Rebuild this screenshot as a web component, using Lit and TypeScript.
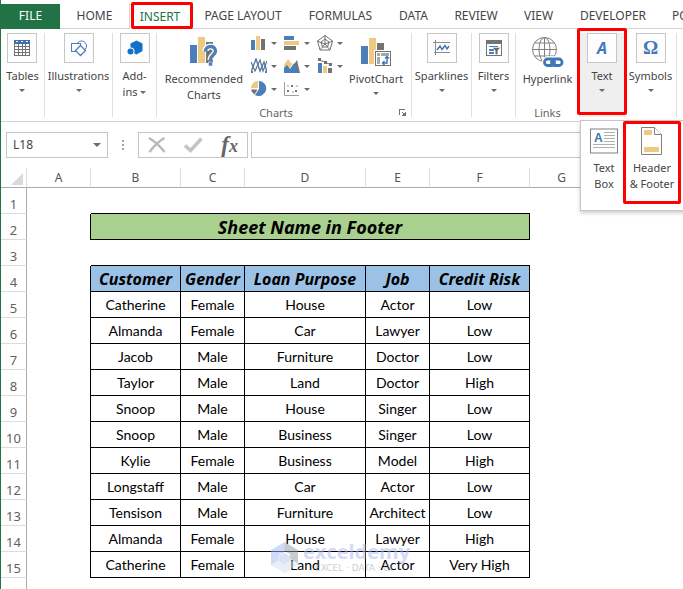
import { LitElement, html, svg, css, nothing } from "lit";
import { customElement, property } from "lit/decorators.js";

const BLUE = "#4a7fba";
const SAND = "#eec982";
const GRAY = "#737373";

/* ---------- icons ---------- */

const icons: Record<string, unknown> = {
  tables: html`<svg width="16" height="16" viewBox="0 0 16 16" shape-rendering="crispEdges">
    <rect x="0" y="0" width="16" height="16" fill="#737373" />
    <rect x="0" y="0" width="16" height="4" fill="#3d6fa8" />
    ${[2, 7, 12].map((x) => svg`<rect x=${x} y="1" width="2" height="1" fill="#fff"/>`)}
    ${[4, 7, 10, 13].map((y) => [1, 5, 9, 12].map((x) => svg`<rect x=${x} y=${y} width=${x === 9 ? 2 : 3} height="2" fill="#fff"/>`))}
  </svg>`,
  shapes: html`<svg width="18" height="17" viewBox="0 0 18 17" fill="#fff" stroke="#4a7fba">
    <circle cx="11.5" cy="6" r="5" />
    <rect x="1.5" y="3.5" width="9" height="8" />
    <path d="M10.500 5.500 L15.500 10.500 L10.500 15.500 L5.500 10.500Z" stroke-width="1.300" />
  </svg>`,
  addins: html`<svg width="16" height="16" viewBox="0 0 16 16">
    <path d="M9.500 0.500 L15.500 3.500 V11 L9.500 14.500 L3.500 11.500 V3.500Z" fill="#0f71c9" />
    <circle cx="3.500" cy="11.500" r="4" fill="#fff" />
    <circle cx="3.500" cy="11.500" r="3" fill="#0f71c9" />
  </svg>`,
  recommended: html`<svg width="30" height="32" viewBox="0 0 30 32">
    <rect x="1" y="9" width="7" height="18" fill="#4a7fba" />
    <rect x="9" y="1" width="7" height="26" fill="#eec982" />
    <rect x="17" y="6" width="7" height="21" fill="#737373" />
    <path d="M16.500 15 C16.500 9 26.500 9 26.500 15 C26.500 19 21.500 19 21.500 24" fill="none" stroke="#fff" stroke-width="6" />
    <path d="M16.500 15.500 C16.500 9 26.500 9 26.500 15 C26.500 19 21.500 19 21.500 24" fill="none" stroke="#4a7fba" stroke-width="3.400" />
    <rect x="19.500" y="26" width="4" height="4" fill="#4a7fba" stroke="#fff" stroke-width="0.500" />
  </svg>`,
  pivot: html`<svg width="30" height="30" viewBox="0 0 30 30">
    <rect x="0" y="9" width="7" height="18" fill="#4a7fba" />
    <rect x="8" y="1" width="7" height="26" fill="#eec982" />
    <rect x="16" y="6" width="7" height="8" fill="#737373" />
    <rect x="13" y="13" width="17" height="17" fill="#fff" />
    <rect x="14.500" y="14.500" width="15" height="14" fill="#fff" stroke="#737373" />
    <path d="M16 16h3v3h-3zM20 16h8v3h-8zM16 20h3v7h-3z" fill="#a8a8a8" />
    <path d="M22 26 H26 V20 M24 21.500 L26 19.500 L28 21.500 M23.500 24 L21.500 26 L23.500 28" fill="none" stroke="#3d72b4" stroke-width="1.400" />
  </svg>`,
  sparkline: html`<svg width="18" height="16" viewBox="0 0 18 16" fill="none">
    <path d="M0 2.500H17M2.500 0V15M1 12.500H17" stroke="#8a8a8a" />
    <path d="M4 10 L7 6 L9 9.500 L12 5.500 L14 9 L16 6" stroke="#3d72b4" stroke-width="1.400" />
  </svg>`,
  filter: html`<svg width="16" height="17" viewBox="0 0 16 17">
    <rect x="0.500" y="0.500" width="15" height="15" fill="#fff" stroke="#737373" />
    <rect x="0" y="0" width="16" height="4" fill="#737373" />
    <path d="M3 6.500H12" stroke="#4a7fba" />
    <path d="M3 10H8M3 13H8" stroke="#4a7fba" stroke-width="2" />
    <path d="M6.500 7.500H14.500L11.800 10.500V14.500H9.200V10.500Z" fill="#666" stroke="#fff" stroke-width="0.500" />
  </svg>`,
  link: html`<svg width="32" height="31" viewBox="0 0 32 31" fill="none">
    <g stroke="#808080">
      <circle cx="12.500" cy="12.500" r="12" />
      <ellipse cx="12.500" cy="12.500" rx="5.500" ry="12" />
      <path d="M12.500 0.500V24.500M0.500 12.500H24.500M2.500 6H22.500M2.500 19H22.500" />
    </g>
    <g stroke="#fff" stroke-width="6">
      <rect x="13" y="22" width="9" height="6" rx="3" />
      <rect x="20" y="22" width="9" height="6" rx="3" />
    </g>
    <g stroke="#3f78b8" stroke-width="2.800">
      <rect x="12.500" y="22" width="10" height="6.500" rx="3" />
      <rect x="19.500" y="22" width="10.500" height="6.500" rx="3" />
    </g>
  </svg>`,
  textbox: html`<svg width="28" height="26" viewBox="0 0 28 26" fill="none">
    <rect x="0.500" y="1" width="27" height="24" fill="#fff" stroke="#808080" />
    <path d="M14 4.500H25M14 7.500H25M14 10.500H25M14 13.500H25M3 16.500H25M3 19.500H25" stroke="#b0b0b0" />
    <text x="4" y="14" font-family="Liberation Sans" font-weight="700" font-size="12" fill="#3d72b4">A</text>
  </svg>`,
  headerfooter: html`<svg width="22" height="28" viewBox="0 0 22 28">
    <path d="M0.500 0.500H13.500L20.500 7.500V27.500H0.500Z" fill="#fff" stroke="#808080" />
    <path d="M13.500 0.500V7.500H20.500" fill="#fff" stroke="#808080" />
    <rect x="3" y="3" width="8" height="5" fill="#eec982" />
    <rect x="3" y="20" width="15" height="5" fill="#eec982" />
  </svg>`,
  wordart: html`<svg width="28" height="26" viewBox="0 0 28 26">
    <path d="M4 24 L17 2 H21 L24 24 H19 V19 H12 L9 24Z" fill="#4a7fba" />
  </svg>`,
  launcher: html`<svg width="8" height="8" viewBox="0 0 8 8" shape-rendering="crispEdges">
    <path d="M0.500 6V0.500H6" fill="none" stroke="#737373" />
    <path d="M7 2V7H2Z" fill="#737373" /><path d="M3.500 3.500L6 6" stroke="#737373" />
  </svg>`,
  cancel: html`<svg width="18" height="16" viewBox="0 0 18 16" fill="none" stroke="#b9b9b9" stroke-width="2.400">
    <path d="M1 1C6 4 12 9 16.500 15M16.500 1C11 4 6 9 1.500 15" />
  </svg>`,
  enter: html`<svg width="19" height="16" viewBox="0 0 19 16" fill="none" stroke="#c4c4c4" stroke-width="3.600">
    <path d="M1 8.500L6.500 13.500L17.500 1.500" />
  </svg>`,
};

const miniCharts: { label: string; art: unknown }[] = [
  { label: "Column chart", art: svg`<path fill=${BLUE} d="M0 5h4v10h-4z"/><path fill=${SAND} d="M5 1h4v14h-4z"/><path fill=${GRAY} d="M10 4h4v11h-4z"/>` },
  { label: "Bar chart", art: svg`<path fill=${BLUE} d="M0 1h10v4H0z"/><path fill=${SAND} d="M0 6h15v4H0z"/><path fill=${GRAY} d="M0 11h12v4H0z"/>` },
  { label: "Radar chart", art: svg`<g fill="none" stroke=${GRAY}><path d="M8 .5L15.500 6L13 15H3L.5 6Z"/><path d="M8 4L12 7L10.500 12H5.500L4 7Z"/><path d="M8 0V9L16 6M8 9L13 15M8 9L3 15M8 9L0 6"/></g>` },
  { label: "Line chart", art: svg`<g fill="none"><path stroke=${GRAY} stroke-width="1.200" d="M0 4L4 13L9 2L12 13L16 3"/><path stroke=${BLUE} stroke-width="1.400" d="M0 14L5 1L9 13L13 4L16 14"/></g><path fill=${BLUE} d="M0 13h2v2H0zM4 1h2v2H4zM14 13h2v2h-2z"/>` },
  { label: "Area chart", art: svg`<path fill=${GRAY} d="M9 8L13 2L16 15H10Z"/><path fill=${SAND} d="M0 7L4 1L8 6L6 10H0Z"/><path fill=${BLUE} d="M0 15V10L3 7L6 11L10 5L15 15Z"/>` },
  { label: "Combo chart", art: svg`<path fill=${BLUE} d="M1 5h4v10H1z"/><path fill=${SAND} d="M6 8h4v7H6z"/><path fill=${GRAY} d="M11 10h4v5h-4z"/><path fill="none" stroke=${GRAY} d="M2 2L8 4L14 7"/><path fill=${GRAY} d="M1 0h3v3H1zM7 3h3v3H7zM12 5h3v3h-3z"/>` },
  { label: "Pie chart", art: svg`<path fill=${BLUE} d="M8 0A7.500 7.500 0 1 1 4 14L8 8Z"/><path fill=${SAND} d="M7 0V7H0A7 7 0 0 1 7 0Z"/><path fill=${GRAY} d="M0 8.500H6.500L3.500 13.500A7 7 0 0 1 0 8.500Z"/>` },
  { label: "Scatter chart", art: svg`<path fill="none" stroke="#a0a0a0" d="M.5 1V14.500H15"/><path fill=${BLUE} d="M3 9h2v2H3zM7 4h2v2H7zM11 9h2v2h-2z"/><path fill=${SAND} d="M3 4h2v2H3zM8 10h2v2H8zM12 4h2v2h-2z"/>` },
];

/* ---------- data ---------- */

const tabs = ["file", "home", "insert", "page layout", "formulas", "data", "review", "view", "developer", "powerpivot"];
const columns = ["A", "B", "C", "D", "E", "F", "G", ""];
const headings = ["Customer", "Gender", "Loan Purpose", "Job", "Credit Risk"];
const records = [
  ["Catherine", "Female", "House", "Actor", "Low"],
  ["Almanda", "Female", "Car", "Lawyer", "Low"],
  ["Jacob", "Male", "Furniture", "Doctor", "Low"],
  ["Taylor", "Male", "Land", "Doctor", "High"],
  ["Snoop", "Male", "House", "Singer", "Low"],
  ["Snoop", "Male", "Business", "Singer", "Low"],
  ["Kylie", "Female", "Business", "Model", "High"],
  ["Longstaff", "Male", "Car", "Actor", "Low"],
  ["Tensison", "Male", "Furniture", "Architect", "Low"],
  ["Almanda", "Female", "House", "Lawyer", "High"],
  ["Catherine", "Female", "Land", "Actor", "Very High"],
];

const base = css`
  :host, *, *::before, *::after { box-sizing: border-box; }
  button {
    font: inherit; color: inherit; background: none; border: 0; padding: 0; margin: 0;
    cursor: pointer; white-space: nowrap;
  }
  svg { display: block; flex: none; }
  .caret {
    display: inline-block; width: 0; height: 0;
    border: 3px solid transparent; border-top-color: #6b6b6b; border-bottom: 0;
  }
  .mark {
    position: absolute; border: 3px solid #fe0000; border-radius: 2px;
    pointer-events: none; z-index: 5;
  }
`;

/* ---------- ribbon button ---------- */

@customElement("ribbon-button")
export class RibbonButton extends LitElement {
  @property() icon = "";
  @property() glyph = "";
  @property({ type: Array }) lines: string[] = [];
  @property({ type: Boolean }) boxed = false;
  @property() menu: "" | "below" | "inline" = "";

  static styles = [base, css`
    :host { display: block; }
    .btn { display: flex; flex-direction: column; align-items: center; width: 100%; }
    .icon { display: flex; align-items: center; justify-content: center; height: 38px; }
    .boxed {
      width: 30px; height: 30px; margin-bottom: 5px;
      border: 1px solid #c6c6c6; background: #fdfdfd;
    }
    .line { line-height: 16px; text-align: center; }
    .below { margin-top: 5px; }
    .inline { vertical-align: 2px; }
    .glyph { color: #4178b8; font-weight: 700; line-height: 20px; }
    .omega { font-family: "Liberation Serif", serif; font-size: 19px; }
    .art { font-family: "Open Sans", sans-serif; font-size: 16px; font-style: italic; }
  `];

  render() {
    const last = this.lines.length - 1;
    return html`<button class="btn" type="button">
      <span class="icon ${this.boxed ? "boxed" : ""}">
        ${this.glyph
          ? html`<span class="glyph ${this.glyph === "Ω" ? "omega" : "art"}">${this.glyph}</span>`
          : icons[this.icon]}
      </span>
      ${this.lines.map((l, i) => html`<span class="line">${l}${this.menu === "inline" && i === last ? html` <i class="caret inline"></i>` : nothing}</span>`)}
      ${this.menu === "below" ? html`<i class="caret below"></i>` : nothing}
    </button>`;
  }
}

/* ---------- ribbon ---------- */

@customElement("excel-ribbon")
export class ExcelRibbon extends LitElement {
  static styles = [base, css`
    :host { display: block; color: #444; }
    .tabs {
      display: grid; grid-template-columns: 59px 69px 62px 104px 91px 55px 70px 55px 94px 100px;
      height: 29px; padding-top: 4px; border-bottom: 1px solid #d4d4d4;
    }
    .tab { position: relative; text-transform: uppercase; height: 25px; padding-bottom: 1px; }
    .file { background: #217346; color: #fff; }
    .active { color: #217346; background: #fff; border: 1px solid #d4d4d4; border-bottom: 0; }
    .tab .mark { inset: -3px -3px 0 1px; }
    .groups {
      display: flex; height: 93px; padding-top: 4px; border-bottom: 1px solid #d4d4d4;
      font-size: 11px;
    }
    .group {
      position: relative; flex: none; height: 84px; border-right: 1px solid #e1e1e1;
      display: flex; flex-direction: column; align-items: center;
    }
    .w44 { width: 44px; }
    .w52 { width: 52px; }
    .w60 { width: 60px; }
    .w64 { width: 64px; }
    .w68 { width: 68px; }
    .charts { width: 255px; padding: 0 6px; }
    .charts .title { padding-right: 16px; }
    .row { display: flex; align-items: flex-start; gap: 4px; flex: 1; }
    .open { background: #efefef; border-right-color: #efefef; width: 45px; }
    .open > .mark { inset: -5px -3px 2px -3px; }
    .title { color: #666; line-height: 16px; text-align: center; margin-top: auto; height: 12px; }
    .gallery { display: grid; grid-template-columns: 33px 33px 28px; grid-auto-rows: 23px; margin-left: 4px; }
    .mini { display: flex; align-items: center; gap: 4px; height: 20px; }
    .launch { position: absolute; right: 4px; bottom: 0; }
    .menu {
      position: absolute; top: 87px; left: 0; z-index: 4; display: flex; gap: 3px;
      width: 160px; height: 91px; padding: 1px 4px;
      background: #fff; border: 1px solid #c6c6c6; box-shadow: 0 2px 4px #0003;
    }
    .item { position: relative; flex: none; }
    .narrow { width: 38px; }
    .wide { width: 52px; }
    .item .mark { inset: -1px -3px 5px -3px; }
  `];

  render() {
    return html`
      <nav class="tabs" aria-label="Ribbon tabs">
        ${tabs.map((t) => html`<button type="button" class="tab ${t === "file" ? "file" : t === "insert" ? "active" : ""}">${t}${t === "insert" ? html`<span class="mark"></span>` : nothing}</button>`)}
      </nav>
      <div class="groups">
        <div class="group w44"><ribbon-button boxed icon="tables" .lines=${["Tables"]} menu="below"></ribbon-button></div>
        <div class="group w68"><ribbon-button boxed icon="shapes" .lines=${["Illustrations"]} menu="below"></ribbon-button></div>
        <div class="group w44"><ribbon-button boxed icon="addins" .lines=${["Add-", "ins"]} menu="inline"></ribbon-button></div>
        <div class="group charts">
          <div class="row">
            <ribbon-button icon="recommended" .lines=${["Recommended", "Charts"]}></ribbon-button>
            <div class="gallery">
              ${miniCharts.map((c) => html`<button type="button" class="mini" aria-label=${c.label}><svg width="16" height="16" viewBox="0 0 16 16">${c.art}</svg><i class="caret"></i></button>`)}
            </div>
            <ribbon-button icon="pivot" .lines=${["PivotChart"]} menu="below"></ribbon-button>
          </div>
          <div class="title">Charts</div>
          <button type="button" class="launch" aria-label="Chart options">${icons.launcher}</button>
        </div>
        <div class="group w60"><ribbon-button boxed icon="sparkline" .lines=${["Sparklines"]} menu="below"></ribbon-button></div>
        <div class="group w44"><ribbon-button boxed icon="filter" .lines=${["Filters"]} menu="below"></ribbon-button></div>
        <div class="group w64">
          <ribbon-button icon="link" .lines=${["Hyperlink"]}></ribbon-button>
          <div class="title">Links</div>
        </div>
        <div class="group open">
          <ribbon-button boxed glyph="A" .lines=${["Text"]} menu="below"></ribbon-button>
          <span class="mark"></span>
          <div class="menu">
            <div class="item narrow"><ribbon-button icon="textbox" .lines=${["Text", "Box"]}></ribbon-button></div>
            <div class="item wide"><ribbon-button icon="headerfooter" .lines=${["Header", "& Footer"]}></ribbon-button><span class="mark"></span></div>
            <div class="item wide"><ribbon-button icon="wordart" .lines=${["WordArt"]} menu="below"></ribbon-button></div>
          </div>
        </div>
        <div class="group w52"><ribbon-button boxed glyph="Ω" .lines=${["Symbols"]} menu="below"></ribbon-button></div>
      </div>`;
  }
}

/* ---------- formula bar ---------- */

@customElement("formula-bar")
export class FormulaBar extends LitElement {
  static styles = [base, css`
    :host { display: flex; height: 46px; padding: 10px 0 10px 5px; color: #444; }
    .box { border: 1px solid #c6c6c6; display: flex; align-items: center; background: #fff; }
    .name { width: 102px; padding-right: 6px; }
    .cell { flex: 1; min-width: 0; border: 0; outline: 0; padding: 0 6px; font: inherit; color: inherit; }
    .name button { display: flex; }
    .name .caret { border-width: 4px; border-bottom-width: 0; }
    .dots { width: 30px; display: grid; place-content: center; gap: 2px; }
    .dots i { width: 2px; height: 2px; background: #a6a6a6; }
    .tools { width: 110px; justify-content: space-between; padding: 0 9px; }
    .fx { font: italic 700 23px/20px "Liberation Serif", serif; color: #666; }
    .fx small { font-size: 18px; }
    .formula { flex: 1; min-width: 0; margin-left: 3px; border-right: 0; }
  `];

  render() {
    return html`
      <div class="box name">
        <input class="cell" aria-label="Name box" value="L18" />
        <button type="button" aria-label="Names"><i class="caret"></i></button>
      </div>
      <div class="dots"><i></i><i></i><i></i></div>
      <div class="box tools">
        <button type="button" aria-label="Cancel">${icons.cancel}</button>
        <button type="button" aria-label="Enter">${icons.enter}</button>
        <button type="button" class="fx" aria-label="Insert function">f<small>x</small></button>
      </div>
      <div class="box formula"><input class="cell" aria-label="Formula" /></div>`;
  }
}

/* ---------- worksheet ---------- */

@customElement("work-sheet")
export class WorkSheet extends LitElement {
  static styles = [base, css`
    :host { display: block; position: relative; }
    table { table-layout: fixed; width: 100%; min-width: 593px; border-collapse: separate; border-spacing: 0; }
    col.head { width: 26px; }
    col.s { width: 64px; }
    col.b { width: 90px; }
    col.d { width: 121px; }
    col.f { width: 100px; }
    th, td { padding: 0; height: 26px; text-align: center; font-weight: 400; white-space: nowrap; }
    thead th {
      height: 20px; line-height: 18px; color: #555;
      border-bottom: 1px solid #ababab; border-right: 1px solid #dcdcdc;
    }
    .corner svg { margin: 3px 3px 0 auto; }
    .num {
      color: #5f5f5f; font-size: 13px; line-height: 17px; vertical-align: bottom;
      border-right: 1px solid #ababab; border-bottom: 1px solid #dcdcdc;
    }
    .cell {
      font: 14px/18px Lato, "Open Sans", sans-serif; color: #000;
      border-right: 1px solid #000; border-bottom: 1px solid #000;
    }
    .edge { border-right: 1px solid #000; }
    .under { border-bottom: 1px solid #000; }
    .banner, .heading { font: italic 700 16px/22px "Noto Sans", "Open Sans", sans-serif; }
    .banner { background: #a9d08e; font-size: 18px; }
    .heading { background: #9bc2e6; }
    .watermark {
      position: absolute; top: 374px; left: 269px; display: flex; gap: 4px; opacity: .5;
      pointer-events: none;
    }
    .brand { font: 700 20px/20px "Open Sans", sans-serif; color: #a9b9ef; }
    .tag { font: 9px/12px "DejaVu Sans", sans-serif; color: #9aa0ab; padding-left: 12px; }
  `];

  render() {
    return html`
      <table>
        <colgroup>
          <col class="head" /><col class="s" /><col class="b" /><col class="s" /><col class="d" />
          <col class="s" /><col class="f" /><col class="s" /><col />
        </colgroup>
        <thead>
          <tr>
            <th class="corner" aria-label="Select all"><svg width="12" height="12" viewBox="0 0 12 12"><path d="M12 0V12H0Z" fill="#dadada" /></svg></th>
            ${columns.map((c) => html`<th scope="col">${c}</th>`)}
          </tr>
        </thead>
        <tbody>
          <tr><th class="num" scope="row">1</th><td></td><td class="under" colspan="5"></td><td colspan="2"></td></tr>
          <tr><th class="num" scope="row">2</th><td class="edge"></td><td class="cell banner" colspan="5">Sheet Name in Footer</td><td colspan="2"></td></tr>
          <tr><th class="num" scope="row">3</th><td></td><td class="under" colspan="5"></td><td colspan="2"></td></tr>
          <tr><th class="num" scope="row">4</th><td class="edge"></td>${headings.map((h) => html`<th class="cell heading" scope="col">${h}</th>`)}<td colspan="2"></td></tr>
          ${records.map((r, i) => html`<tr><th class="num" scope="row">${i + 5}</th><td class="edge"></td>${r.map((v) => html`<td class="cell">${v}</td>`)}<td colspan="2"></td></tr>`)}
          <tr><th class="num"></th><td colspan="8"></td></tr>
        </tbody>
      </table>
      <div class="watermark" aria-hidden="true">
        <svg width="29" height="31" viewBox="0 0 29 31">
          <path d="M14.500 0L1 8V23L8 26L9 13L15 10Z" fill="#a3b7f5" />
          <path d="M14.500 0L28 8V22L20 17V12L14 9Z" fill="#9298a6" />
          <path d="M1 23L14.500 31L28 23L20 18L14 21L8 18Z" fill="#cfe3f2" />
          <path d="M14 11L20 14V19L14 22L9 19V14Z" fill="#b8c6ea" />
        </svg>
        <div><div class="brand">exceldemy</div><div class="tag">EXCEL · DATA · BI</div></div>
      </div>`;
  }
}

/* ---------- page ---------- */

@customElement("app-root")
export class AppRoot extends LitElement {
  static styles = css`
    :host {
      display: block; box-sizing: border-box; height: 100vh; overflow: hidden;
      border-left: 1px solid #217346; background: #fff;
      font: 12px/16px "Noto Sans", "Open Sans", sans-serif;
    }
  `;

  render() {
    return html`<excel-ribbon></excel-ribbon><formula-bar></formula-bar><work-sheet></work-sheet>`;
  }
}
